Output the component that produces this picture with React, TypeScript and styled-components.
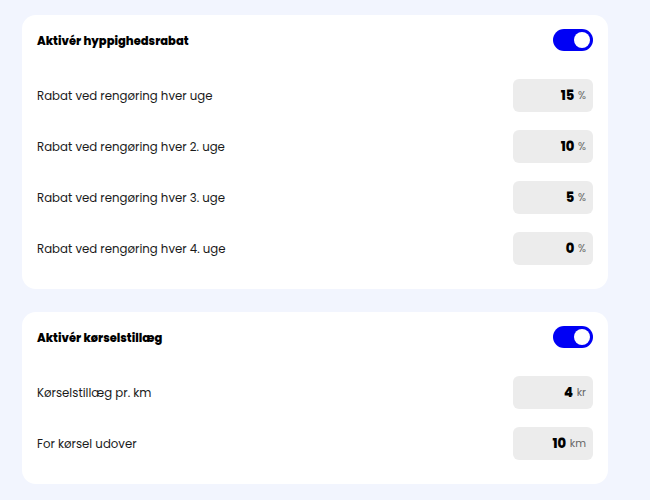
import React from "react";
import styled, { createGlobalStyle } from "styled-components";

const Global = createGlobalStyle`
  html, body { margin: 0; padding: 0; background: #f2f5fe; }
  body { font-family: "Poppins", "Inter", "Noto Sans", sans-serif; }
`;

const Page = styled.div`
  display: flex;
  flex-direction: column;
  gap: 23px;
  padding: 15px 0 0 22px;
  min-height: 500px;
  box-sizing: border-box;
`;

const Card = styled.section`
  width: 586px;
  box-sizing: border-box;
  background: #ffffff;
  border-radius: 14px;
  padding: 14px 15px 24px;
  display: flex;
  flex-direction: column;
  gap: 18px;
`;

const Header = styled.div`
  display: flex;
  align-items: center;
  justify-content: space-between;
  height: 22px;
  margin-bottom: 10px;
`;

const Title = styled.h2`
  margin: 0;
  padding-top: 2px;
  font-size: 11.5px;
  font-weight: 800;
  color: #000;
`;

const Toggle = styled.div<{ $on: boolean }>`
  width: 40px;
  height: 22px;
  border-radius: 11px;
  background: ${(p) => (p.$on ? "#0000f5" : "#ccc")};
  position: relative;
  &::after {
    content: "";
    position: absolute;
    top: 3px;
    left: ${(p) => (p.$on ? "21px" : "3px")};
    width: 16px;
    height: 16px;
    border-radius: 50%;
    background: #fff;
  }
`;

const Row = styled.div`
  display: flex;
  align-items: center;
  justify-content: space-between;
  height: 33px;
`;

const Label = styled.span`
  font-size: 11.75px;
  color: #1a1a1a;
  padding-top: 1px;
`;

const Field = styled.div`
  width: 80px;
  height: 33px;
  box-sizing: border-box;
  background: #ececec;
  border-radius: 6px;
  display: flex;
  align-items: center;
  justify-content: flex-end;
  gap: 4px;
  padding-right: 7px;
`;

const Value = styled.span`
  font-size: 13px;
  font-weight: 800;
  letter-spacing: -0.2px;
  color: #000;
`;

const Unit = styled.span`
  font-size: 10.5px;
  color: #666;
`;

type Item = { label: string; value: string; unit: string };

const freq: Item[] = [
  { label: "Rabat ved rengøring hver uge", value: "15", unit: "%" },
  { label: "Rabat ved rengøring hver 2. uge", value: "10", unit: "%" },
  { label: "Rabat ved rengøring hver 3. uge", value: "5", unit: "%" },
  { label: "Rabat ved rengøring hver 4. uge", value: "0", unit: "%" },
];

const drive: Item[] = [
  { label: "Kørselstillæg pr. km", value: "4", unit: "kr" },
  { label: "For kørsel udover", value: "10", unit: "km" },
];

const Section = ({ title, items }: { title: string; items: Item[] }) => (
  <Card>
    <Header>
      <Title>{title}</Title>
      <Toggle $on />
    </Header>
    {items.map((it) => (
      <Row key={it.label}>
        <Label>{it.label}</Label>
        <Field>
          <Value>{it.value}</Value>
          <Unit>{it.unit}</Unit>
        </Field>
      </Row>
    ))}
  </Card>
);

export default function App() {
  return (
    <>
      <Global />
      <Page>
        <Section title="Aktivér hyppighedsrabat" items={freq} />
        <Section title="Aktivér kørselstillæg" items={drive} />
      </Page>
    </>
  );
}
